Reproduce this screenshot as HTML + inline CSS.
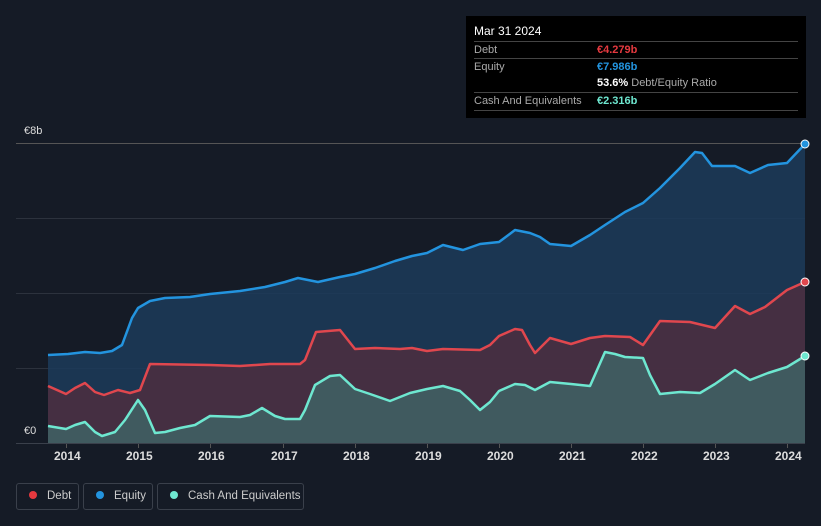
<!DOCTYPE html><html><head><style>
html,body{margin:0;background:#151b26;font-family:"Liberation Sans",sans-serif;width:821px;height:526px;overflow:hidden;position:relative}
.tt{position:absolute;left:466px;top:16px;width:340px;height:102px;background:#000;color:#fff;font-size:11px}
.tt .r{position:absolute;left:8px;right:8px;border-top:1px solid #444;height:17px;line-height:17px;color:#aaa}
.tt .v{position:absolute;left:123px;font-weight:bold}
.leg{position:absolute;top:483px;height:27px;border:1px solid #3a404b;border-radius:3px;color:#ccc;font-size:11.5px;line-height:25px;box-sizing:border-box;white-space:nowrap;overflow:hidden}
.leg i{display:inline-block;width:8px;height:8px;border-radius:50%;margin:0 10px 0 12px}
.ax{position:absolute;top:449px;color:#ddd;font-size:12px;font-weight:bold}
</style></head><body>
<svg width="821" height="526" style="position:absolute;left:0;top:0">
<g stroke="#2c323d" stroke-width="1">
<line x1="16" y1="143.5" x2="805" y2="143.5" stroke="#555"/><line x1="16" y1="218.5" x2="805" y2="218.5"/><line x1="16" y1="293.5" x2="805" y2="293.5"/><line x1="16" y1="368.5" x2="805" y2="368.5"/><line x1="16" y1="443.5" x2="805" y2="443.5" stroke="#3a404b"/>
</g>
<g>
<path fill="#1c3b5a" fill-opacity="0.85" d="M48,355 L68,354 L85,352 L100,353 L112,351 L122,345 L132,318 L138,308 L150,301 L165,298 L190,297 L210,294 L240,291 L265,287 L285,282 L298,278 L318,282 L340,277 L355,274 L375,268 L395,261 L412,256 L427,253 L443,245 L463,250 L480,244 L499,242 L515,230 L530,233 L540,237 L550,244 L571,246 L590,235 L605,225 L625,212 L643,203 L660,188 L680,168 L695,152 L702,153 L712,166 L735,166 L750,173 L768,165 L787,163 L805,144 L805,443 L48,443Z"/>
<path fill="#4a2f40" fill-opacity="0.9" d="M48,386 L66,394 L75,388 L85,383 L95,392 L104,395 L118,390 L130,393 L140,390 L150,364 L210,365 L240,366 L270,364 L300,364 L305,360 L316,332 L340,330 L355,349 L375,348 L400,349 L412,348 L427,351 L443,349 L480,350 L490,345 L499,336 L515,329 L522,330 L530,345 L535,353 L550,338 L571,344 L590,338 L605,336 L630,337 L643,345 L660,321 L690,322 L715,328 L735,306 L750,314 L765,307 L787,290 L805,282 L805,443 L48,443Z"/>
<path fill="#3f6a6a" fill-opacity="0.75" d="M48,426 L66,429 L75,425 L85,422 L95,432 L102,436 L115,432 L125,420 L138,400 L145,410 L155,433 L165,432 L180,428 L195,425 L210,416 L240,417 L250,415 L262,408 L275,416 L285,419 L300,419 L305,410 L315,385 L330,376 L340,375 L355,389 L370,394 L390,401 L410,393 L427,389 L443,386 L460,391 L470,400 L480,410 L490,402 L499,391 L515,384 L525,385 L535,390 L550,382 L571,384 L590,386 L605,352 L615,354 L625,357 L643,358 L650,375 L660,394 L680,392 L700,393 L715,384 L735,370 L750,380 L768,373 L787,367 L805,356 L805,443 L48,443Z"/>
<g fill="none" stroke-width="2.5" stroke-linejoin="round">
<path stroke="#2394df" d="M48,355 L68,354 L85,352 L100,353 L112,351 L122,345 L132,318 L138,308 L150,301 L165,298 L190,297 L210,294 L240,291 L265,287 L285,282 L298,278 L318,282 L340,277 L355,274 L375,268 L395,261 L412,256 L427,253 L443,245 L463,250 L480,244 L499,242 L515,230 L530,233 L540,237 L550,244 L571,246 L590,235 L605,225 L625,212 L643,203 L660,188 L680,168 L695,152 L702,153 L712,166 L735,166 L750,173 L768,165 L787,163 L805,144"/>
<path stroke="#e0474e" d="M48,386 L66,394 L75,388 L85,383 L95,392 L104,395 L118,390 L130,393 L140,390 L150,364 L210,365 L240,366 L270,364 L300,364 L305,360 L316,332 L340,330 L355,349 L375,348 L400,349 L412,348 L427,351 L443,349 L480,350 L490,345 L499,336 L515,329 L522,330 L530,345 L535,353 L550,338 L571,344 L590,338 L605,336 L630,337 L643,345 L660,321 L690,322 L715,328 L735,306 L750,314 L765,307 L787,290 L805,282"/>
<path stroke="#6ee7d0" d="M48,426 L66,429 L75,425 L85,422 L95,432 L102,436 L115,432 L125,420 L138,400 L145,410 L155,433 L165,432 L180,428 L195,425 L210,416 L240,417 L250,415 L262,408 L275,416 L285,419 L300,419 L305,410 L315,385 L330,376 L340,375 L355,389 L370,394 L390,401 L410,393 L427,389 L443,386 L460,391 L470,400 L480,410 L490,402 L499,391 L515,384 L525,385 L535,390 L550,382 L571,384 L590,386 L605,352 L615,354 L625,357 L643,358 L650,375 L660,394 L680,392 L700,393 L715,384 L735,370 L750,380 L768,373 L787,367 L805,356"/>
</g>
<circle cx="805" cy="144" r="4" fill="#2394df" stroke="#fff" stroke-width="1"/>
<circle cx="805" cy="282" r="4" fill="#e0474e" stroke="#fff" stroke-width="1"/>
<circle cx="805" cy="356" r="4" fill="#6ee7d0" stroke="#fff" stroke-width="1"/>
</g>
<g stroke="#555"><line x1="66.5" y1="444" x2="66.5" y2="448"/><line x1="138.5" y1="444" x2="138.5" y2="448"/><line x1="210.5" y1="444" x2="210.5" y2="448"/><line x1="283.5" y1="444" x2="283.5" y2="448"/><line x1="355.5" y1="444" x2="355.5" y2="448"/><line x1="427.5" y1="444" x2="427.5" y2="448"/><line x1="499.5" y1="444" x2="499.5" y2="448"/><line x1="571.5" y1="444" x2="571.5" y2="448"/><line x1="643.5" y1="444" x2="643.5" y2="448"/><line x1="715.5" y1="444" x2="715.5" y2="448"/><line x1="787.5" y1="444" x2="787.5" y2="448"/></g>
</svg>
<div style="position:absolute;left:24px;top:125px;color:#ddd;font-size:11px">€8b</div>
<div style="position:absolute;left:24px;top:425px;color:#ddd;font-size:11px">€0</div>
<div class="ax" style="left:54px">2014</div><div class="ax" style="left:126px">2015</div><div class="ax" style="left:198px">2016</div><div class="ax" style="left:271px">2017</div><div class="ax" style="left:343px">2018</div><div class="ax" style="left:415px">2019</div><div class="ax" style="left:487px">2020</div><div class="ax" style="left:559px">2021</div><div class="ax" style="left:631px">2022</div><div class="ax" style="left:703px">2023</div><div class="ax" style="left:775px">2024</div>
<div class="tt">
<div style="position:absolute;left:8px;top:8px;font-size:12px">Mar 31 2024</div>
<div class="r" style="top:25px">Debt<span class="v" style="color:#e5393f">€4.279b</span></div>
<div class="r" style="top:42px">Equity<span class="v" style="color:#2394df">€7.986b</span></div>
<div class="r" style="top:59px;border:none"><span class="v" style="color:#fff">53.6% <span style="color:#aaa;font-weight:normal">Debt/Equity Ratio</span></span></div>
<div class="r" style="top:76px">Cash And Equivalents<span class="v" style="color:#6ee7d0">€2.316b</span></div>
<div class="r" style="top:94px;height:0"></div>
</div>
<div class="leg" style="left:16px;width:63px"><i style="background:#e5393f"></i>Debt</div>
<div class="leg" style="left:83px;width:70px"><i style="background:#2394df"></i>Equity</div>
<div class="leg" style="left:157px;width:147px"><i style="background:#6ee7d0"></i>Cash And Equivalents</div>
</body></html>
